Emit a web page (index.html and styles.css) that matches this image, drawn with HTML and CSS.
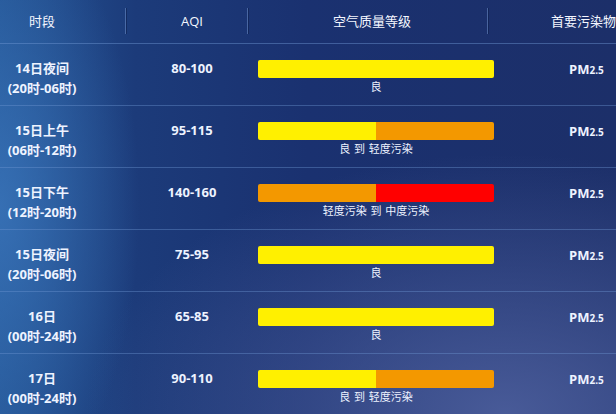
FILE: index.html
```html
<!DOCTYPE html>
<html lang="zh-CN">
<head>
<meta charset="utf-8">
<link rel="stylesheet" href="styles.css">
</head>
<body>
<div class="panel">
  <div class="head">
    <div class="h h1">时段</div>
    <div class="h h2">AQI</div>
    <div class="h h3">空气质量等级</div>
    <div class="h h4">首要污染物</div>
  </div>

  <div class="row">
    <div class="c1">14日夜间<br>(20时-06时)</div>
    <div class="c2">80-100</div>
    <div class="c3"><div class="bar"><span class="y full"></span></div><div class="lbl">良</div></div>
    <div class="c4">PM<small>2.5</small></div>
  </div>

  <div class="row">
    <div class="c1">15日上午<br>(06时-12时)</div>
    <div class="c2">95-115</div>
    <div class="c3"><div class="bar"><span class="y"></span><span class="o"></span></div><div class="lbl">良 到 轻度污染</div></div>
    <div class="c4">PM<small>2.5</small></div>
  </div>

  <div class="row">
    <div class="c1">15日下午<br>(12时-20时)</div>
    <div class="c2">140-160</div>
    <div class="c3"><div class="bar"><span class="o"></span><span class="r"></span></div><div class="lbl">轻度污染 到 中度污染</div></div>
    <div class="c4">PM<small>2.5</small></div>
  </div>

  <div class="row">
    <div class="c1">15日夜间<br>(20时-06时)</div>
    <div class="c2">75-95</div>
    <div class="c3"><div class="bar"><span class="y full"></span></div><div class="lbl">良</div></div>
    <div class="c4">PM<small>2.5</small></div>
  </div>

  <div class="row">
    <div class="c1">16日<br>(00时-24时)</div>
    <div class="c2">65-85</div>
    <div class="c3"><div class="bar"><span class="y full"></span></div><div class="lbl">良</div></div>
    <div class="c4">PM<small>2.5</small></div>
  </div>

  <div class="row">
    <div class="c1">17日<br>(00时-24时)</div>
    <div class="c2">90-110</div>
    <div class="c3"><div class="bar"><span class="y"></span><span class="o"></span></div><div class="lbl">良 到 轻度污染</div></div>
    <div class="c4">PM<small>2.5</small></div>
  </div>
</div>
</body>
</html>
```
FILE: styles.css
```css
html, body {
  margin: 0;
  padding: 0;
}
body {
  width: 616px;
  height: 414px;
  overflow: hidden;
  font-family: "Open Sans", "Noto Sans CJK SC", sans-serif;
  color: #eef3ff;
  background:
    radial-gradient(ellipse 140px 300px at 0% 50%, rgba(60,120,190,0.75), rgba(60,120,190,0) 100%),
    radial-gradient(ellipse 420px 260px at 82% 100%, rgba(80,98,160,0.85), rgba(80,98,160,0) 100%),
    linear-gradient(90deg, #245595 0%, #1c3b7a 22%, #1a3170 50%, #1c2f69 100%);
}
.panel {
  width: 616px;
}
.head {
  display: grid;
  grid-template-columns: 126px 122px 240px 128px;
  height: 43px;
  border-bottom: 1px solid rgba(110,150,210,0.45);
  font-size: 13px;
  line-height: 43px;
  color: #f4f7ff;
}
.h {
  white-space: nowrap;
}
.h1 { text-align: center; padding-right: 42px; }
.h2 { text-align: center; padding-left: 10px; }
.h3 { text-align: center; padding-left: 8px; }
.h4 { text-align: left; padding-left: 63px; }
.h2, .h3, .h4 {
  position: relative;
}
.h2::before, .h3::before, .h4::before {
  content: "";
  position: absolute;
  left: -1px;
  top: 8px;
  height: 26px;
  width: 1px;
  background: rgba(130,165,220,0.45);
  box-shadow: 1px 0 0 rgba(10,25,70,0.5);
}
.row {
  display: grid;
  grid-template-columns: 126px 132px 236px 122px;
  align-items: start;
  height: 61px;
  border-bottom: 1px solid rgba(110,150,210,0.4);
  font-size: 13px;
  font-weight: 700;
  line-height: 20px;
}
.c1 {
  text-align: center;
  padding-right: 42px;
  padding-top: 14px;
  white-space: nowrap;
}
.c2 {
  text-align: center;
  padding-top: 14px;
}
.c3 {
  padding-top: 16px;
}
.bar {
  display: flex;
  height: 18px;
  border-radius: 2px;
  overflow: hidden;
}
.bar span {
  flex: 1;
}
.y { background: #fff000; }
.o { background: #f39800; }
.r { background: #ff0000; }
.lbl {
  margin-top: 2px;
  text-align: center;
  font-size: 11px;
  line-height: 14px;
  font-weight: 400;
  word-spacing: 1px;
  white-space: pre;
}
.c4 {
  padding-top: 15px;
  padding-left: 75px;
  white-space: nowrap;
}
.c4 small {
  font-size: 10px;
}
```
